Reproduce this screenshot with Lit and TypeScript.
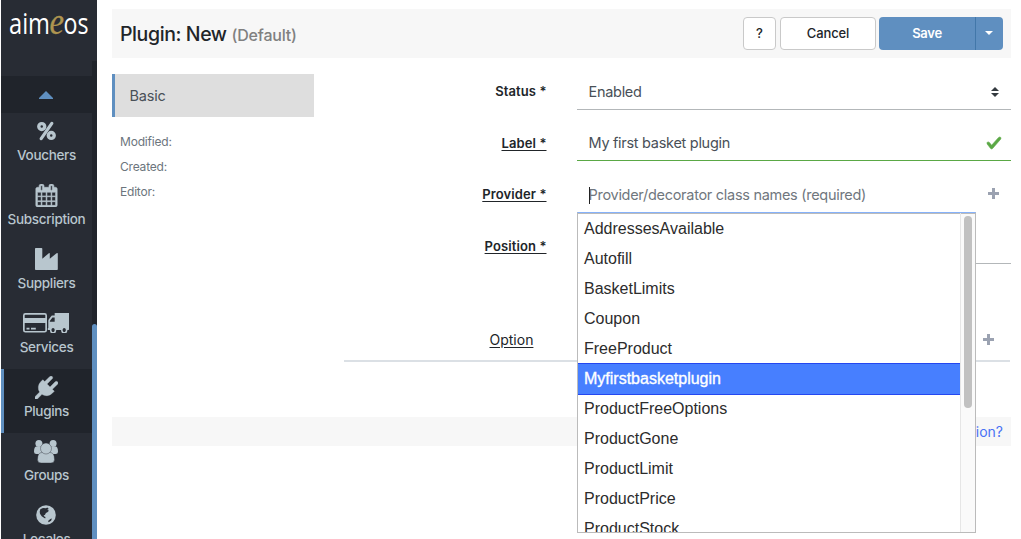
import { LitElement, html, css, svg } from "lit";
import { customElement, property } from "lit/decorators.js";
import { classMap } from "lit/directives/class-map.js";

const icons: Record<string, unknown> = {
  percent: svg`<svg width="19" height="20" viewBox="0 0 20 20" fill="none" stroke="currentColor"><circle cx="5" cy="5.300" r="3.100" stroke-width="3.600"/><circle cx="15" cy="14.700" r="3.100" stroke-width="3.600"/><path d="M15.600 2 4.400 18" stroke-width="3.400" stroke-linecap="round"/></svg>`,
  calendar: svg`<svg width="23" height="23" viewBox="0 0 1792 1792" fill="currentColor" stroke="currentColor" stroke-width="44"><path d="M192 1664h288v-288h-288v288zm352 0h320v-288h-320v288zm-352-352h288v-320h-288v320zm352 0h320v-320h-320v320zm-352-384h288v-288h-288v288zm736 736h320v-288h-320v288zm-384-736h320v-288h-320v288zm768 736h288v-288h-288v288zm-384-352h320v-320h-320v320zm-352-864v-288q0-13-9.5-22.5t-22.5-9.5h-64q-13 0-22.5 9.5t-9.5 22.5v288q0 13 9.5 22.5t22.5 9.5h64q13 0 22.5-9.5t9.5-22.5zm736 864h288v-320h-288v320zm-384-384h320v-288h-320v288zm384 0h288v-288h-288v288zm32-480v-288q0-13-9.5-22.5t-22.5-9.5h-64q-13 0-22.5 9.5t-9.5 22.5v288q0 13 9.5 22.5t22.5 9.5h64q13 0 22.5-9.5t9.5-22.5zm384-64v1280q0 52-38 90t-90 38h-1408q-52 0-90-38t-38-90v-1280q0-52 38-90t90-38h128v-96q0-66 47-113t113-47h64q66 0 113 47t47 113v96h384v-96q0-66 47-113t113-47h64q66 0 113 47t47 113v96h128q52 0 90 38t38 90z"/></svg>`,
  industry: svg`<svg width="23" height="22" viewBox="0 0 23 22" fill="currentColor"><path d="M.8 0h5.700q.8 0 .8.8v10L13.800 5.200q1-.6 1 .5v5L21.600 5.200q1.200-.7 1.200.6V21.200q0 .8-.8.8H.8q-.8 0-.8-.8V.8Q0 0 .8 0z"/></svg>`,
  services: svg`<svg width="46" height="20" viewBox="0 0 46 20" fill="currentColor"><path fill-rule="evenodd" d="M2.400 0h19.200Q24 0 24 2.400v14.800q0 2.400-2.400 2.400H2.400Q0 19.600 0 17.200V2.400Q0 0 2.400 0zM2.300 1.700q-.6 0-.6.6v2.800h20.600V2.300q0-.6-.6-.6zM1.700 9.900v7.400q0 .6.6.6h19.400q.6 0 .6-.6V9.900zM3.500 14.800h3v1.600h-3zM8 14.800h4.800v1.600H8z"/><svg x="24.500" y="-1.800" width="21.500" height="23" viewBox="64 256 1728 1408" preserveAspectRatio="none"><path d="M640 1408q0-52-38-90t-90-38-90 38-38 90 38 90 90 38 90-38 38-90zm-384-512h384v-256h-158q-13 0-22 9l-195 195q-9 9-9 22v30zm1280 512q0-52-38-90t-90-38-90 38-38 90 38 90 90 38 90-38 38-90zm256-1088v1024q0 15-4 26.500t-13.500 18.500-16.500 11.500-23.500 6-22.500 2-25.500 0-22.500-.5q0 106-75 181t-181 75-181-75-75-181h-384q0 106-75 181t-181 75-181-75-75-181h-64q-3 0-22.500.5t-25.500 0-22.500-2-23.500-6-16.500-11.500-13.500-18.500-4-26.500q0-26 19-45t45-19v-320q0-8-.5-35t0-38 2.500-34.500 6.500-37 14-30.500 22.500-30l198-198q19-19 50.500-32t58.500-13h160v-192q0-26 19-45t45-19h1024q26 0 45 19t19 45z"/></svg></svg>`,
  plug: svg`<svg width="23" height="23" viewBox="0 0 1792 1792" fill="currentColor" stroke="currentColor" stroke-width="30"><path d="M1755 453q37 38 37 90.500t-37 90.500l-401 400 150 150-160 160q-163 163-389.500 186.500t-411.500-100.500l-362 362h-181v-181l362-362q-124-185-100.500-411.500t186.500-389.500l160-160 150 150 400-401q38-37 91-37t90 37 37 90.500-37 90.500l-400 401 234 234 401-400q38-37 91-37t90 37z"/></svg>`,
  groups: svg`<svg width="24" height="23" viewBox="0 0 24 23" fill="currentColor"><circle cx="4.900" cy="3.500" r="3.500"/><circle cx="19.100" cy="3.500" r="3.500"/><path d="M2.600 6.500h5l1.400 2.500v5H2.400Q0 14 0 11.700 0 6.500 2.600 6.500zM21.400 6.500h-5L15 9v5h6.600q2.400 0 2.400-2.300Q24 6.500 21.400 6.500z"/><path stroke="#282c34" stroke-width=".4" d="M8 12.500h8q4.500 0 4.500 7 0 3.500-3.600 3.500H7.100q-3.600 0-3.600-3.500 0-7 4.500-7z"/><circle cx="12" cy="8.500" r="5.500" stroke="#282c34" stroke-width=".4"/></svg>`,
  globe: svg`<svg width="20" height="20" viewBox="0 0 20 20"><circle cx="10" cy="10" r="9.800" fill="currentColor"/><path fill="#282c34" d="M4.300 4.300 7 3l3 .2 1.300-.7 1.500 1.500-1.600.7 1.800 1-1.600 1.500-1.500.8-1 2-1.300.3.700 1.200 1.200.4-.3 1.500-2-1.200-1.500-1-1.700-2.500-.3-2zM14.300 14l1.600-.6-.8 2.400-2.500 1.400-.5-1.200z"/></svg>`,
};

@customElement("side-menu")
export class SideMenu extends LitElement {
  static styles = css`
    :host { display: flex; flex-direction: column; width: 96px; height: 539px; margin-left: 1px; background: #282c34; color: #b8c6ce; overflow: hidden; box-sizing: border-box; }
    .logo { height: 61px; flex: none; }
    .logo svg { display: block; }
    .body { flex: 1; display: flex; min-height: 0; }
    .items { width: 91px; padding-top: 15px; box-sizing: border-box; }
    .track { width: 5px; background: #20242b; padding-top: 263px; display: flex; box-sizing: border-box; }
    .thumb { flex: 1; background: #5f8fc0; border-radius: 3px 3px 0 0; }
    .up { height: 37px; background: #20242b; display: flex; align-items: center; justify-content: center; padding: 1px 1px 0 0; box-sizing: border-box; color: #5f8fc0; }
    .item { height: 64px; box-sizing: border-box; display: flex; flex-direction: column; align-items: center; font: 14px/20px Inter, sans-serif; }
    .item.active { background: #20242b; border-left: 3px solid #5f8fc0; padding-right: 3px; }
    .icon { height: 36px; flex: none; display: flex; align-items: center; justify-content: center; padding-right: 1px; }
    .label { margin-top: -4px; white-space: nowrap; font-size: 13.500px; font-weight: 450; letter-spacing: -0.32px; }
  `;
  private entries = [
    ["percent", "Vouchers"], ["calendar", "Subscription"], ["industry", "Suppliers"], ["services", "Services"],
    ["plug", "Plugins"], ["groups", "Groups"], ["globe", "Locales"],
  ];
  render() {
    return html`
      <div class="logo"><svg width="96" height="60"><g font-family="Open Sans, sans-serif" font-size="28.500" fill="#fff"><text x="8" y="34" textLength="41" lengthAdjust="spacingAndGlyphs">aim</text><text x="48.500" y="34" fill="#ae9550" stroke="#ae9550" stroke-width=".3" font-family="Liberation Serif, serif" font-style="italic" font-size="37" textLength="14.500" lengthAdjust="spacingAndGlyphs">e</text><text x="62.500" y="34" textLength="25" lengthAdjust="spacingAndGlyphs">os</text></g></svg></div>
      <div class="body">
        <div class="items">
          <div class="up"><svg width="14" height="8"><path fill="currentColor" d="M7 0 14 7V8H0V7z"/></svg></div>
          ${this.entries.map(([icon, label]) => html`
            <div class=${classMap({ item: true, active: label === "Plugins" })}>
              <div class="icon">${icons[icon]}</div><div class="label">${label}</div>
            </div>`)}
        </div>
        <div class="track"><div class="thumb"></div></div>
      </div>`;
  }
}

@customElement("provider-list")
export class ProviderList extends LitElement {
  @property() selected = "";
  static styles = css`
    :host { display: flex; box-sizing: border-box; width: 399px; height: 321px; border: 1px solid #bbb; background: #fff; overflow: hidden; font: 16px/32px "Liberation Sans", Arial, sans-serif; color: #2c2c2c; letter-spacing: 0; }
    .list { flex: 1; box-shadow: inset 0 1px #bbb; }
    .option { height: 30px; padding: 0 6px; white-space: nowrap; }
    .option.selected { height: 32px; margin-bottom: -2px; box-sizing: border-box; border: solid #2447f0; border-width: 1px 0; line-height: 30px; color: #fff; background: #477fff; -webkit-text-stroke: .35px #fff; }
    .bar { width: 8px; border-left: 1px solid #e6e6e6; background: #fafafa; padding: 3px; box-shadow: inset 0 1px #bbb; }
    .thumb { height: 192px; border-radius: 4px; background: #c1c1c1; }
  `;
  private options = ["AddressesAvailable", "Autofill", "BasketLimits", "Coupon", "FreeProduct", "Myfirstbasketplugin",
    "ProductFreeOptions", "ProductGone", "ProductLimit", "ProductPrice", "ProductStock"];
  render() {
    return html`<div class="list">${this.options.map((o) => html`<div class=${classMap({ option: true, selected: o === this.selected })}>${o}</div>`)}</div>
      <div class="bar"><div class="thumb"></div></div>`;
  }
}

@customElement("app-root")
export class AppRoot extends LitElement {
  static styles = css`
    :host { display: flex; width: 1021px; height: 539px; overflow: hidden; background: #fff; font: 14px/20px Inter, sans-serif; color: #212529; }
    svg { display: block; }
    side-menu { flex: none; }
    .main { flex: none; width: 899px; margin-left: 15px; padding-top: 9px; display: flex; flex-direction: column; }
    .header { height: 49px; flex: none; background: #f7f7f7; display: flex; align-items: center; padding: 0 8px; }
    .title { flex: 1; font-size: 19.500px; font-weight: 500; line-height: 30px; letter-spacing: -.4px; padding-top: 2px; }
    .site { font-size: 16px; color: #808080; letter-spacing: -.2px; }
    .btn { box-sizing: border-box; height: 33px; border: 1px solid #c9c9c9; border-radius: 4px; background: #fff; display: flex; align-items: center; justify-content: center; font-size: 13px; font-weight: 500; letter-spacing: -.1px; padding-bottom: 1px; }
    .help { width: 33px; margin-right: 4px; }
    .cancel { width: 96px; margin-right: 3px; }
    .save { width: 96px; border: 0; border-radius: 4px 0 0 4px; background: #5f8fc0; color: #fff; font-weight: 600; letter-spacing: -.3px; }
    .more { width: 28px; border: 0; border-left: 1px solid #4277a9; border-radius: 0 4px 4px 0; background: #5f8fc0; color: #fff; padding: 0 1px 2px 0; }
    .content { display: flex; height: 359px; flex: none; }
    .nav { width: 202px; padding-top: 16px; }
    .tab { box-sizing: border-box; height: 43px; border-left: 3px solid #5f8fc0; background: #dedede; padding: 0 14.500px; line-height: 44px; font-size: 14.500px; letter-spacing: -.2px; color: #495057; }
    .meta { padding: 12px 8px; font-size: 12px; letter-spacing: -.2px; line-height: 25px; color: #6c757d; }
    .form { margin-left: 30px; width: 667px; }
    .row { display: flex; box-sizing: border-box; height: 51px; }
    .row.status, .row.provider { height: 52px; }
    .key { width: 202.500px; margin-right: 30.500px; text-align: right; font-size: 13px; font-weight: 600; padding-top: 23px; letter-spacing: .1px; }
    .hint { text-decoration: underline; text-underline-offset: 2px; text-decoration-thickness: 1px; }
    .field { flex: 1; box-sizing: border-box; border-bottom: 1px solid #b3b7b9; padding: 16px 9px 0 11.500px; display: flex; align-items: center; justify-content: space-between; font-size: 14.500px; color: #495057; letter-spacing: -.29px; }
    .name .field { border-color: #5aa845; padding-top: 15px; }
    .provider .field { position: relative; border: 0; color: #70777e; padding: 16px 12.500px 0 11.500px; }
    .caret { position: absolute; left: 12px; top: 26px; width: 1px; height: 17px; background: #222; }
    .plus { color: #9ba2b1; margin-top: -3px; }
    .popup { position: absolute; left: 0; top: 51px; z-index: 2; border-top: 1px solid #86b2fa; }
    .options { width: 666px; height: 98px; box-sizing: border-box; border-bottom: 2px solid #dbe0e5; display: flex; align-items: flex-end; padding: 0 16.500px 10px 145.500px; justify-content: space-between; font-size: 14px; }
    .options .plus { margin-bottom: 5px; }
    .footer { height: 29px; flex: none; background: #f7f7f7; text-align: right; padding-right: 8px; line-height: 30px; font-size: 14px; color: #4a72f5; }
  `;
  private plus = svg`<svg class="plus" width="11" height="11"><path d="M5.500 0v11M0 5.500h11" stroke="currentColor" stroke-width="3"/></svg>`;
  render() {
    return html`
      <side-menu></side-menu>
      <div class="main">
        <div class="header">
          <div class="title">Plugin: New <span class="site">(Default)</span></div>
          <div class="btn help">?</div><div class="btn cancel">Cancel</div><div class="btn save">Save</div>
          <div class="btn more"><svg width="8" height="4"><path fill="currentColor" d="M0 0h8L4 4z"/></svg></div>
        </div>
        <div class="content">
          <div class="nav">
            <div class="tab">Basic</div>
            <div class="meta"><div>Modified:</div><div>Created:</div><div>Editor:</div></div>
          </div>
          <div class="form">
            <div class="row status"><div class="key">Status *</div><div class="field">Enabled<svg width="14" height="10" viewBox="0 0 14 10"><path fill="#343a40" d="M7 0 11 4H3zM7 10 3 6h8z"/></svg></div></div>
            <div class="row name"><div class="key"><span class="hint">Label *</span></div><div class="field">My first basket plugin<svg width="16" height="16" viewBox="0 0 8 8"><path fill="#5aa845" stroke="#5aa845" stroke-width=".3" d="M2.300 6.730.6 4.530c-.4-1.040.46-1.400 1.100-.8l1.100 1.400 3.400-3.800c.6-.63 1.600-.27 1.200.7l-4 4.600c-.43.5-.8.4-1.100.1z"/></svg></div></div>
            <div class="row provider"><div class="key"><span class="hint">Provider *</span></div><div class="field">Provider/decorator class names (required)${this.plus}<div class="caret"></div><provider-list class="popup" selected="Myfirstbasketplugin"></provider-list></div></div>
            <div class="row position"><div class="key"><span class="hint">Position *</span></div><div class="field"></div></div>
            <div class="options"><span class="hint">Option</span>${this.plus}</div>
          </div>
        </div>
        <div class="footer">Need information?</div>
      </div>`;
  }
}
